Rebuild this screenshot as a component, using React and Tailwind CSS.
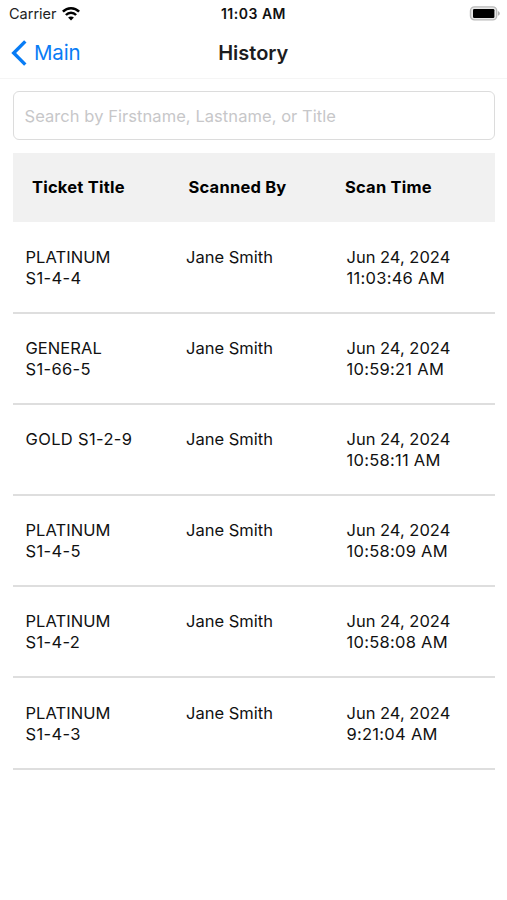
const scans = [
  { title: ['PLATINUM', 'S1-4-4'], by: 'Jane Smith', date: 'Jun 24, 2024', time: '11:03:46 AM' },
  { title: ['GENERAL', 'S1-66-5'], by: 'Jane Smith', date: 'Jun 24, 2024', time: '10:59:21 AM' },
  { title: ['GOLD S1-2-9'], by: 'Jane Smith', date: 'Jun 24, 2024', time: '10:58:11 AM' },
  { title: ['PLATINUM', 'S1-4-5'], by: 'Jane Smith', date: 'Jun 24, 2024', time: '10:58:09 AM' },
  { title: ['PLATINUM', 'S1-4-2'], by: 'Jane Smith', date: 'Jun 24, 2024', time: '10:58:08 AM' },
  { title: ['PLATINUM', 'S1-4-3'], by: 'Jane Smith', date: 'Jun 24, 2024', time: '9:21:04 AM' },
];

function WifiIcon() {
  return (
    <svg className="h-[14px] w-[18px]" viewBox="0 0 18 14" fill="none" stroke="#000" strokeWidth="2.5">
      <path d="M0.9 4.7C5.4 0.1 12.6 0.1 17.1 4.7" />
      <path d="M3.9 8C6.8 5 11.2 5 14.1 8" />
      <path d="M9 13.4L6.1 10.5C7.7 9 10.3 9 11.9 10.5Z" fill="#000" stroke="none" />
    </svg>
  );
}

function BatteryIcon() {
  return (
    <svg className="h-[15px] w-[32px]" viewBox="0 0 32 15">
      <rect x="1.5" y="0.9" width="26.2" height="13" rx="4" fill="#e8e8e8" stroke="#b9b9b9" strokeWidth="1.4" />
      <rect x="4" y="3" width="21.4" height="8.9" rx="1.2" fill="#000" />
      <path d="M29 5.3C31.4 6 31.4 9 29 9.7Z" fill="#b0b0b0" />
    </svg>
  );
}

function StatusBar() {
  return (
    <div className="grid h-[27px] grid-cols-3 items-center pr-[6px] pl-[9px] text-[14.5px]">
      <div className="flex items-center gap-[5.5px] text-[#222]">
        <span>Carrier</span>
        <WifiIcon />
      </div>
      <div className="pr-[3px] text-center text-[14px] font-semibold tracking-[0.5px] whitespace-nowrap text-[#111]">
        11:03 AM
      </div>
      <div className="flex justify-end">
        <BatteryIcon />
      </div>
    </div>
  );
}

function NavBar() {
  return (
    <div className="grid h-[52px] grid-cols-3 items-center border-b border-[#f5f5f5] pr-[11px] pl-[10.5px]">
      <button className="flex items-center gap-[7.5px] text-[20.5px] tracking-[-0.2px] text-[#087cf5]">
        <svg className="h-[26px] w-[16px]" viewBox="0 0 16 26" fill="none" stroke="currentColor" strokeWidth="3.4">
          <path d="M14.3 1.4L2.7 13L14.3 24.6" />
        </svg>
        <span className="pt-[1px]">Main</span>
      </button>
      <h1 className="text-center text-[20px] font-semibold text-[#1c1c1e]">History</h1>
    </div>
  );
}

export default function App() {
  return (
    <div className="h-[900px] w-[507px] overflow-hidden bg-white font-['Inter',sans-serif]">
      <StatusBar />
      <NavBar />
      <div className="pt-[12px] pr-[12.5px] pl-[13px]">
        <input
          className="block h-[49px] w-full rounded-[6px] border border-[#dcdcdc] pl-[10.5px] text-[16.5px] tracking-[0.06px] outline-none placeholder:text-[#c7c7c9]"
          placeholder="Search by Firstname, Lastname, or Title"
        />
        <div className="mt-[12.5px] mb-[1px] flex h-[69px] items-center bg-[#f1f1f1] pl-[19px] text-[16.5px] font-bold tracking-[0.22px] text-black">
          <div className="w-[156.5px]">Ticket Title</div>
          <div className="w-[156.5px]">Scanned By</div>
          <div>Scan Time</div>
        </div>
        {scans.map((scan) => (
          <div
            key={scan.title.join(' ') + scan.time}
            className="flex h-[91.2px] border-b-2 border-[#dedede] pt-[24.2px] pl-[12.5px] text-[16.5px] leading-[21px] text-[#111]"
          >
            <div className="w-[160.5px]">
              {scan.title.map((line) => (
                <div key={line} className={line.includes('-') ? 'tracking-[0.35px]' : 'tracking-[0.05px]'}>
                  {line}
                </div>
              ))}
            </div>
            <div className="w-[160.5px]">{scan.by}</div>
            <div>
              <div>{scan.date}</div>
              <div className="tracking-[0.27px]">{scan.time}</div>
            </div>
          </div>
        ))}
      </div>
    </div>
  );
}
